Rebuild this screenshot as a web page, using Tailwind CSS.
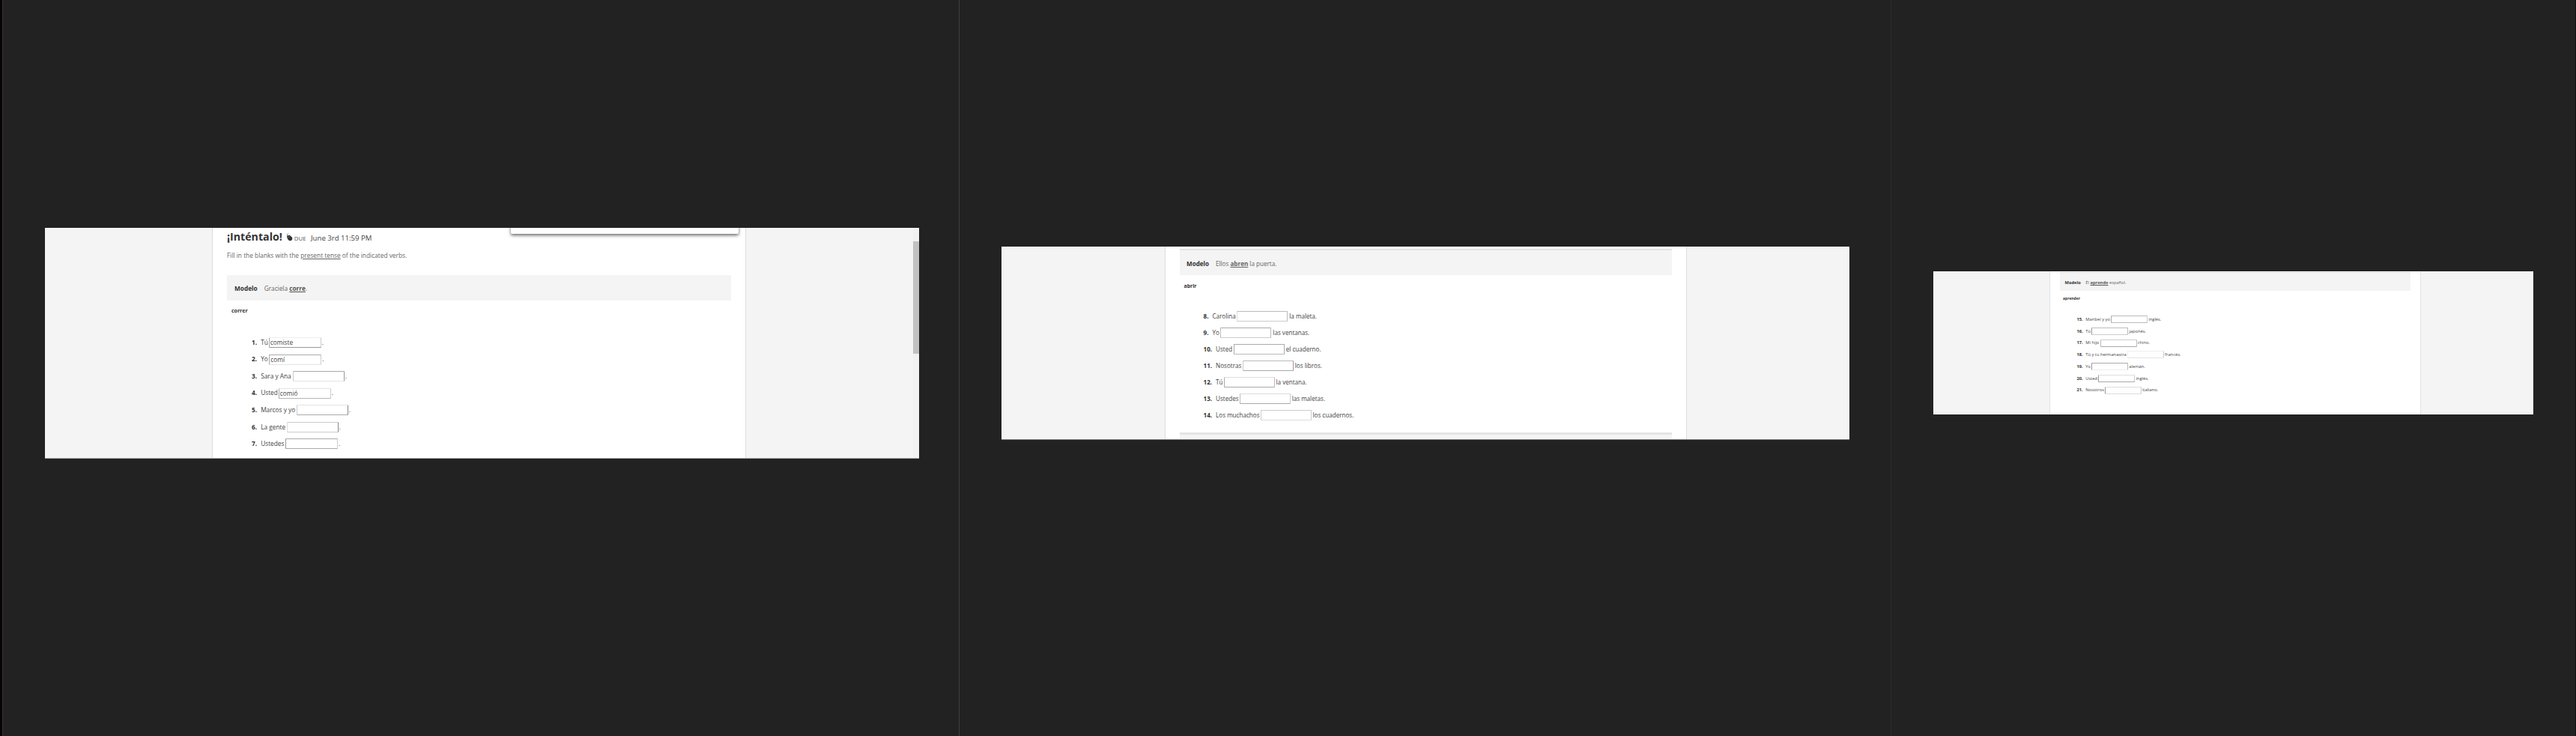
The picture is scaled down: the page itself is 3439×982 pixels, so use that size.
<!DOCTYPE html>
<html lang="es">
<head>
  <meta charset="utf-8">
  <title>¡Inténtalo!</title>
  <script src="https://cdn.jsdelivr.net/npm/@tailwindcss/browser@4"></script>
</head>
<body class="flex h-screen overflow-hidden bg-[#222222] font-['Open_Sans',sans-serif] text-[#444444] whitespace-nowrap">
  <div class="w-[3px] shrink-0 bg-[#080206]"></div>

  <!-- correr -->
  <section class="w-[1277px] shrink-0 border-l border-[#363636] pl-[56px] pt-[304px]">
    <div class="flex w-[1167px] h-[308px] overflow-hidden bg-[#f4f4f4] border-b border-[#a8a8a8]">
      <div class="w-[223px] shrink-0"></div>
      <div class="relative w-[713px] shrink-0 bg-white border-x border-[#dddddd] pl-[19px] pr-[19px]">
        <div class="absolute -top-1 left-[398px] w-[304px] h-3 bg-white rounded-b-xs shadow-[0_2px_4px_rgba(0,0,0,0.6)]"></div>
        <div class="flex items-baseline h-6 leading-6">
          <h1 class="text-[14.2px] leading-6 font-bold text-[#333333]">¡Inténtalo!</h1>
          <svg class="w-[9px] h-[11px] ml-[5px] self-center" viewBox="0 0 9 11" fill="#333333">
            <path d="M1 4 4.4 2.4 8 5.8Q9 8.2 7.2 9.8 5 11 3 9.2L1.4 6.8Z" />
            <path d="M1.4 4.2V1.8L3.2.6" fill="none" stroke="#666666" stroke-width=".8" />
            <path d="M1.6 6.4 4.6 4.6" fill="none" stroke="#aaaaaa" stroke-width=".5" />
          </svg>
          <span class="text-[7.8px] ml-[2px] text-[#555555]">DUE</span>
          <span class="text-[9.6px] ml-[6.5px] text-[#444444]">June 3rd 11:59 PM</span>
        </div>
        <p class="mt-1 h-[17px] text-[8.33px] leading-[17px] text-[#666666]">Fill in the blanks with the <span class="underline">present tense</span> of the indicated verbs.</p>
        <div class="flex items-center mt-[18px] h-[34px] pt-[3px] pl-[10px] bg-[#f4f4f4] text-[8.28px]">
          <b class="text-[#333333] mr-[9px]">Modelo</b>
          <span class="text-[#666666]">Graciela <b class="underline text-[#555555]">corre</b>.</span>
        </div>
        <div class="mt-[7px] pl-[6px] h-[14px] leading-[14px] text-[7px] font-bold text-[#333333]">correr</div>
        <ol class="mt-[23.8px] pl-[33px] text-[8.3px]">
          <li class="flex items-center h-[22.55px]"><b class="text-[#333333] mr-[5px]">1.</b>Tú<span class="w-[70px] h-[14px] ml-px mr-px pl-px leading-[12px] border border-t-[#eeeeee] border-r-[#cccccc] border-b-[#999999] border-l-[#aaaaaa] rounded-[1px]">comiste</span>.</li>
          <li class="flex items-center h-[22.55px]"><b class="text-[#333333] mr-[5px]">2.</b>Yo<span class="w-[70px] h-[14px] ml-[1.5px] mr-px pl-px leading-[12px] border border-t-[#aaaaaa] border-r-[#cccccc] border-b-[#e4e4e4] border-l-[#aaaaaa] rounded-[1px]">comí</span>.</li>
          <li class="flex items-center h-[22.55px]"><b class="text-[#333333] mr-[5px]">3.</b>Sara y Ana<span class="w-[69px] h-[14px] ml-[2px] mr-px border border-t-[#aaaaaa] border-r-[#999999] border-b-[#e4e4e4] border-l-[#cccccc] rounded-[1px]"></span>.</li>
          <li class="flex items-center h-[22.55px]"><b class="text-[#333333] mr-[5px]">4.</b>Usted<span class="w-[70px] h-[14px] ml-px mr-px pl-px leading-[12px] border border-t-[#e4e4e4] border-r-[#cccccc] border-b-[#b4b4b4] border-l-[#aaaaaa] rounded-[1px]">comió</span>.</li>
          <li class="flex items-center h-[22.55px]"><b class="text-[#333333] mr-[5px]">5.</b>Marcos y yo<span class="w-[69px] h-[14px] ml-[1.5px] mr-px border border-t-[#e4e4e4] border-r-[#888888] border-b-[#aaaaaa] border-l-[#cccccc] rounded-[1px]"></span>.</li>
          <li class="flex items-center h-[22.55px]"><b class="text-[#333333] mr-[5px]">6.</b>La gente<span class="w-[69px] h-[14px] ml-[1.5px] mr-px border border-t-[#cccccc] border-r-[#888888] border-b-[#cccccc] border-l-[#dddddd] rounded-[1px]"></span>.</li>
          <li class="flex items-center h-[22.55px]"><b class="text-[#333333] mr-[5px]">7.</b>Ustedes<span class="w-[70px] h-[14px] ml-[1.5px] mr-px border border-t-[#aaaaaa] border-r-[#cccccc] border-b-[#aaaaaa] border-l-[#999999] rounded-[1px]"></span>.</li>
        </ol>
      </div>
      <div class="flex-1"></div>
      <div class="w-[8px] bg-[#f1f1f1] pt-[18px]">
        <div class="h-[150px] bg-[#c1c1c1]"></div>
      </div>
    </div>
  </section>

  <!-- abrir -->
  <section class="w-[1244px] shrink-0 border-l border-[#3e3e3e] pl-[56px] pt-[329px]">
    <div class="flex w-[1132px] h-[258px] overflow-hidden bg-[#f4f4f4] border-b border-[#777777]">
      <div class="w-[218px] shrink-0"></div>
      <div class="w-[697px] shrink-0 bg-white border-x border-[#dddddd] pt-[3px] pl-[19px] pr-[19px]">
        <div class="flex items-center h-[35.3px] pt-[3px] pl-[9px] bg-[#f4f4f4] border-t-2 border-[#e4e4e4] text-[8.1px]">
          <b class="text-[#333333] mr-[9px]">Modelo</b>
          <span class="text-[#666666]">Ellos <b class="underline text-[#666666]">abren</b> la puerta.</span>
        </div>
        <div class="mt-[7.3px] pl-[5.5px] h-[14px] leading-[14px] text-[6.93px] font-bold text-[#333333]">abrir</div>
        <ol class="mt-[22.4px] pl-[31.5px] text-[8.1px]">
          <li class="flex items-center h-[22.05px]"><b class="text-[#333333] mr-[5px]">8.</b>Carolina<span class="w-[68px] h-[14px] ml-[1.5px] mr-[2px] border border-t-[#bbbbbb] border-r-[#bbbbbb] border-b-[#cccccc] border-l-[#dddddd] rounded-[1px]"></span>la maleta.</li>
          <li class="flex items-center h-[22.05px]"><b class="text-[#333333] mr-[5px]">9.</b>Yo<span class="w-[68px] h-[14px] ml-[1.5px] mr-[2px] border border-t-[#aaaaaa] border-r-[#bbbbbb] border-b-[#cccccc] border-l-[#bbbbbb] rounded-[1px]"></span>las ventanas.</li>
          <li class="flex items-center h-[22.05px]"><b class="text-[#333333] mr-[5px]">10.</b>Usted<span class="w-[68px] h-[14px] ml-[1.5px] mr-[2px] border border-t-[#aaaaaa] border-r-[#aaaaaa] border-b-[#bbbbbb] border-l-[#aaaaaa] rounded-[1px]"></span>el cuaderno.</li>
          <li class="flex items-center h-[22.05px]"><b class="text-[#333333] mr-[5px]">11.</b>Nosotras<span class="w-[68px] h-[14px] ml-[1.5px] mr-[2px] border border-t-[#bbbbbb] border-r-[#999999] border-b-[#aaaaaa] border-l-[#cccccc] rounded-[1px]"></span>los libros.</li>
          <li class="flex items-center h-[22.05px]"><b class="text-[#333333] mr-[5px]">12.</b>Tú<span class="w-[68px] h-[14px] ml-px mr-[2px] border border-t-[#dddddd] border-r-[#bbbbbb] border-b-[#aaaaaa] border-l-[#aaaaaa] rounded-[1px]"></span>la ventana.</li>
          <li class="flex items-center h-[22.05px]"><b class="text-[#333333] mr-[5px]">13.</b>Ustedes<span class="w-[68px] h-[14px] ml-px mr-[2px] border border-t-[#dddddd] border-r-[#cccccc] border-b-[#aaaaaa] border-l-[#bbbbbb] rounded-[1px]"></span>las maletas.</li>
          <li class="flex items-center h-[22.05px]"><b class="text-[#333333] mr-[5px]">14.</b>Los muchachos<span class="w-[68px] h-[14px] ml-px mr-[2px] border border-t-[#cccccc] border-r-[#cccccc] border-b-[#dddddd] border-l-[#cccccc] rounded-[1px]"></span>los cuadernos.</li>
        </ol>
        <div class="mt-[11.6px] h-[12px] bg-[#f4f4f4] border-t-3 border-[#e4e4e4]"></div>
      </div>
    </div>
  </section>

  <!-- aprender -->
  <section class="flex-1 border-l border-[#2c2c2c] pl-[56px] pt-[362px]">
    <div class="flex w-[801px] h-[191px] overflow-hidden bg-[#f4f4f4]">
      <div class="w-[155px] shrink-0"></div>
      <div class="w-[496px] shrink-0 bg-white border-x border-[#e2e2e2] pt-px pl-[13px] pr-[13px]">
        <div class="flex items-center h-[24.7px] pt-[3px] pl-[6.5px] bg-[#f4f4f4] border-t border-[#dddddd] text-[5.75px]">
          <b class="text-[#333333] mr-[6.5px]">Modelo</b>
          <span class="text-[#666666]">Él <b class="underline text-[#555555]">aprende</b> español.</span>
        </div>
        <div class="mt-[5.4px] pl-[4px] h-[10px] leading-[10px] text-[4.98px] font-bold text-[#333333]">aprender</div>
        <ol class="mt-[15.5px] pl-[22.5px] text-[5.78px]">
          <li class="flex items-center h-[15.7px]"><b class="text-[#333333] mr-[3.5px]">15.</b>Maribel y yo<span class="w-[49px] h-[10px] mx-[1.2px] border border-t-[#bbbbbb] border-r-[#cccccc] border-b-[#bbbbbb] border-l-[#aaaaaa] rounded-[1px]"></span>inglés.</li>
          <li class="flex items-center h-[15.7px]"><b class="text-[#333333] mr-[3.5px]">16.</b>Tú<span class="w-[49px] h-[10px] mx-[1.2px] border border-t-[#bbbbbb] border-r-[#bbbbbb] border-b-[#cccccc] border-l-[#999999] rounded-[1px]"></span>japonés.</li>
          <li class="flex items-center h-[15.7px]"><b class="text-[#333333] mr-[3.5px]">17.</b>Mi hijo<span class="w-[49px] h-[10px] mx-[1.2px] border border-t-[#cccccc] border-r-[#bbbbbb] border-b-[#aaaaaa] border-l-[#bbbbbb] rounded-[1px]"></span>chino.</li>
          <li class="flex items-center h-[15.7px]"><b class="text-[#333333] mr-[3.5px]">18.</b>Tú y tu hermanastra<span class="w-[49px] h-[10px] mx-[1.2px] border border-t-[#eeeeee] border-r-[#cccccc] border-b-[#e4e4e4] border-l-[#eeeeee] rounded-[1px]"></span>francés.</li>
          <li class="flex items-center h-[15.7px]"><b class="text-[#333333] mr-[3.5px]">19.</b>Yo<span class="w-[49px] h-[10px] mx-[1.2px] border border-t-[#aaaaaa] border-r-[#bbbbbb] border-b-[#eeeeee] border-l-[#999999] rounded-[1px]"></span>alemán.</li>
          <li class="flex items-center h-[15.7px]"><b class="text-[#333333] mr-[3.5px]">20.</b>Usted<span class="w-[49px] h-[10px] mx-[1.2px] border border-t-[#dddddd] border-r-[#cccccc] border-b-[#aaaaaa] border-l-[#999999] rounded-[1px]"></span>inglés.</li>
          <li class="flex items-center h-[15.7px]"><b class="text-[#333333] mr-[3.5px]">21.</b>Nosotros<span class="w-[49px] h-[10px] mx-px border border-t-[#dddddd] border-r-[#cccccc] border-b-[#dddddd] border-l-[#999999] rounded-[1px]"></span>italiano.</li>
        </ol>
      </div>
    </div>
  </section>
  <div class="w-px shrink-0 bg-[#111111]"></div>
</body>
</html>
